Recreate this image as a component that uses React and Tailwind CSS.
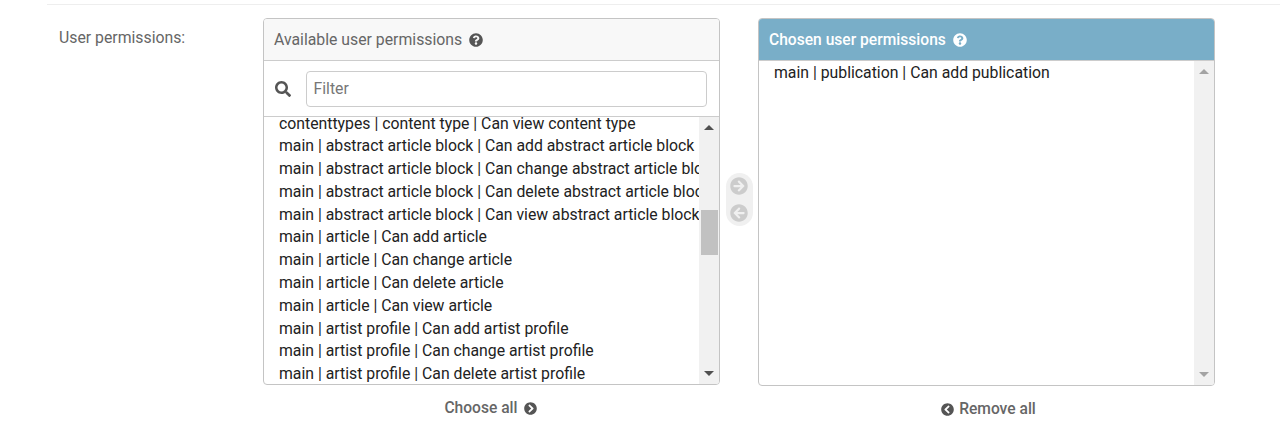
import React from "react";
import { FaQuestionCircle, FaSearch, FaArrowCircleRight, FaArrowCircleLeft, FaChevronCircleRight, FaChevronCircleLeft } from "react-icons/fa";

const rows = [
  "contenttypes | content type | Can view content type",
  "main | abstract article block | Can add abstract article block",
  "main | abstract article block | Can change abstract article block",
  "main | abstract article block | Can delete abstract article block",
  "main | abstract article block | Can view abstract article block",
  "main | article | Can add article",
  "main | article | Can change article",
  "main | article | Can delete article",
  "main | article | Can view article",
  "main | artist profile | Can add artist profile",
  "main | artist profile | Can change artist profile",
  "main | artist profile | Can delete artist profile",
];

function Scrollbar({ thumb, muted }) {
  const arrow = muted ? "border-[#a3a3a3]" : "border-[#505050]";
  return (
    <div className="w-[20px] shrink-0 bg-[#f1f1f1] flex flex-col items-center">
      <div className={`mt-[8px] w-0 h-0 border-x-[5px] border-x-transparent border-b-[5px] ${arrow}`} />
      {thumb ? <div className="mt-[80px] w-[17px] h-[45px] bg-[#c1c1c1]" /> : null}
      <div className={`mt-auto mb-[8px] w-0 h-0 border-x-[5px] border-x-transparent border-t-[5px] ${arrow}`} />
    </div>
  );
}

export default function App() {
  return (
    <div className="w-[1280px] h-[427px] overflow-hidden bg-white font-['Roboto',sans-serif] pt-[4px] pl-[47px]">
      <div className="border-t border-[#eeeeee] pt-[13px] pl-[12px] flex items-start">
        <div className="w-[204px] shrink-0 pt-[11px] text-[15.8px] leading-[18px] text-[#666666]">User permissions:</div>

        <div className="w-[457px] shrink-0 flex flex-col">
          <div className="h-[367px] border border-[#c4c4c4] rounded-[4px] overflow-hidden flex flex-col">
            <div className="h-[42px] shrink-0 bg-[#f8f8f8] border-b border-[#cccccc] flex items-center pl-[10px] gap-[7px] text-[15.8px] text-[#666666]">
              <span>Available user permissions</span>
              <FaQuestionCircle className="w-[14px] h-[14px] text-[#555555]" />
            </div>
            <div className="h-[56px] shrink-0 border-b border-[#cccccc] flex items-center pl-[11px] pr-[12px] gap-[15px]">
              <FaSearch className="w-[16px] h-[16px] shrink-0 text-[#555555]" />
              <div className="flex-1 h-[36px] border border-[#cccccc] rounded-[4px] pl-[6.5px] flex items-center text-[15.8px] text-[#777777]">Filter</div>
            </div>
            <div className="flex flex-1 min-h-0">
              <div className="flex-1 min-w-0 overflow-hidden pl-[15px]">
                <div className="mt-[-4.5px]">
                  {rows.map((r) => (
                    <div key={r} className="h-[22.8px] leading-[22.8px] whitespace-nowrap text-[15.8px] text-[#222222]">{r}</div>
                  ))}
                </div>
              </div>
              <Scrollbar thumb />
            </div>
          </div>
          <div className="mt-[13px] flex items-center justify-center gap-[6px] pr-[2px] text-[15.6px] leading-[20px] font-medium text-[#666666]">
            <span>Choose all</span>
            <FaChevronCircleRight className="w-[13px] h-[13px] text-[#555555]" />
          </div>
        </div>

        <div className="w-[38px] shrink-0 flex justify-center pt-[155px]">
          <div className="w-[27px] h-[53px] rounded-[14px] bg-[#f0f0f0] flex flex-col items-center justify-center gap-[9px]">
            <FaArrowCircleRight className="w-[18px] h-[18px] text-[#cccccc]" />
            <FaArrowCircleLeft className="w-[18px] h-[18px] text-[#cccccc]" />
          </div>
        </div>

        <div className="w-[457px] shrink-0 flex flex-col">
          <div className="h-[368px] border border-[#c4c4c4] rounded-[4px] overflow-hidden flex flex-col">
            <div className="h-[42px] shrink-0 bg-[#79aec8] border-b border-[#cccccc] flex items-center pl-[10px] gap-[7px] text-[15.6px] font-medium text-white">
              <span className="pt-[2px]">Chosen user permissions</span>
              <FaQuestionCircle className="w-[14px] h-[14px] text-white" />
            </div>
            <div className="flex flex-1 min-h-0">
              <div className="flex-1 min-w-0 overflow-hidden pl-[15px] h-fit pt-[0.5px]">
                <div className="h-[22.8px] leading-[22.8px] whitespace-nowrap text-[15.8px] text-[#222222]">main | publication | Can add publication</div>
              </div>
              <Scrollbar muted />
            </div>
          </div>
          <div className="mt-[13px] flex items-center justify-center gap-[5px] pl-[4px] text-[15.6px] leading-[20px] font-medium text-[#666666]">
            <FaChevronCircleLeft className="w-[13px] h-[13px] text-[#555555]" />
            <span>Remove all</span>
          </div>
        </div>
      </div>
    </div>
  );
}
